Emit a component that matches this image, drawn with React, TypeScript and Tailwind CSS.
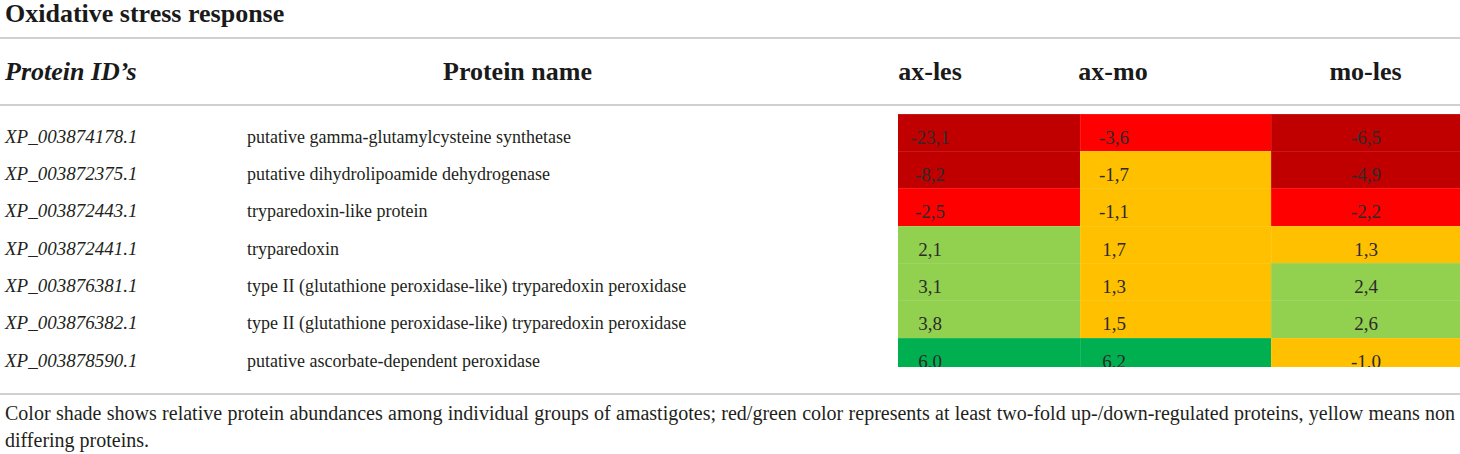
import React from "react";

type Row = {
  id: string;
  name: string;
  v: [string, string, string];
  c: [string, string, string];
  h: string;
};

const DR = "bg-[#c00000]";
const R = "bg-[#ff0000]";
const Y = "bg-[#ffc000]";
const LG = "bg-[#92d050]";
const G = "bg-[#00b050]";

const rows: Row[] = [
  { id: "XP_003874178.1", name: "putative gamma-glutamylcysteine synthetase", v: ["-23,1", "-3,6", "-6,5"], c: [DR, R, DR], h: "h-[37px]" },
  { id: "XP_003872375.1", name: "putative dihydrolipoamide dehydrogenase", v: ["-8,2", "-1,7", "-4,9"], c: [DR, Y, DR], h: "h-[37px]" },
  { id: "XP_003872443.1", name: "tryparedoxin-like protein", v: ["-2,5", "-1,1", "-2,2"], c: [R, Y, R], h: "h-[38px]" },
  { id: "XP_003872441.1", name: "tryparedoxin", v: ["2,1", "1,7", "1,3"], c: [LG, Y, Y], h: "h-[37px]" },
  { id: "XP_003876381.1", name: "type II (glutathione peroxidase-like) tryparedoxin peroxidase", v: ["3,1", "1,3", "2,4"], c: [LG, Y, LG], h: "h-[37px]" },
  { id: "XP_003876382.1", name: "type II (glutathione peroxidase-like) tryparedoxin peroxidase", v: ["3,8", "1,5", "2,6"], c: [LG, Y, LG], h: "h-[38px]" },
  { id: "XP_003878590.1", name: "putative ascorbate-dependent peroxidase", v: ["6,0", "6,2", "-1,0"], c: [G, G, Y], h: "h-[29px]" },
];

export default function App() {
  return (
    <div className="w-[1460px] h-[454px] bg-white text-[#231f20] font-['Liberation_Serif',serif] overflow-hidden">
      <div className="h-[37px] pl-[5px] pt-[1px] text-[26px] font-bold leading-[26px] text-[#1a1a1a]">
        Oxidative stress response
      </div>
      <div className="h-[2px] bg-[#d0d0d0]" />
      <div className="grid grid-cols-[247px_651px_182px_191px_189px] h-[65px] items-center text-[26px] font-bold text-[#1a1a1a] leading-[30px] whitespace-nowrap">
        <div className="pl-[5px] italic">Protein ID’s</div>
        <div className="pl-[196px]">Protein name</div>
        <div className="flex w-[64px] justify-center">ax-les</div>
        <div className="flex w-[66px] justify-center">ax-mo</div>
        <div className="flex justify-center">mo-les</div>
      </div>
      <div className="h-[2px] bg-[#d0d0d0]" />
      <div className="h-[8px]" />
      <div className="flex flex-col">
        {rows.map((r, i) => (
          <div key={i} className={`grid grid-cols-[247px_651px_182px_191px_189px] grid-rows-[100%] ${r.h}`}>
            <div className="pl-[5px] pt-[12px] text-[19px] leading-[22px] italic whitespace-nowrap">{r.id}</div>
            <div className="pt-[12px] text-[18px] leading-[22px] whitespace-nowrap">{r.name}</div>
            <div className={`${r.c[0]} min-h-0 overflow-hidden pt-[12px] text-[19px] leading-[22px] text-[#2b2b2b] border-t border-white/10`}>
              <div className="w-[64px] text-center">{r.v[0]}</div>
            </div>
            <div className={`${r.c[1]} min-h-0 overflow-hidden pt-[12px] text-[19px] leading-[22px] text-[#2b2b2b] border-t border-l border-white/10`}>
              <div className="w-[66px] text-center">{r.v[1]}</div>
            </div>
            <div className={`${r.c[2]} min-h-0 overflow-hidden pt-[12px] text-[19px] leading-[22px] text-[#2b2b2b] text-center border-t border-l border-white/10`}>
              {r.v[2]}
            </div>
          </div>
        ))}
      </div>
      <div className="h-[26px]" />
      <div className="h-[2px] bg-[#d0d0d0]" />
      <div className="pl-[5px] pr-[5px] pt-[5px] text-[20px] leading-[27px] text-justify">
        Color shade shows relative protein abundances among individual groups of amastigotes; red/green color represents at least two-fold up-/down-regulated proteins, yellow means non differing proteins.
      </div>
    </div>
  );
}
